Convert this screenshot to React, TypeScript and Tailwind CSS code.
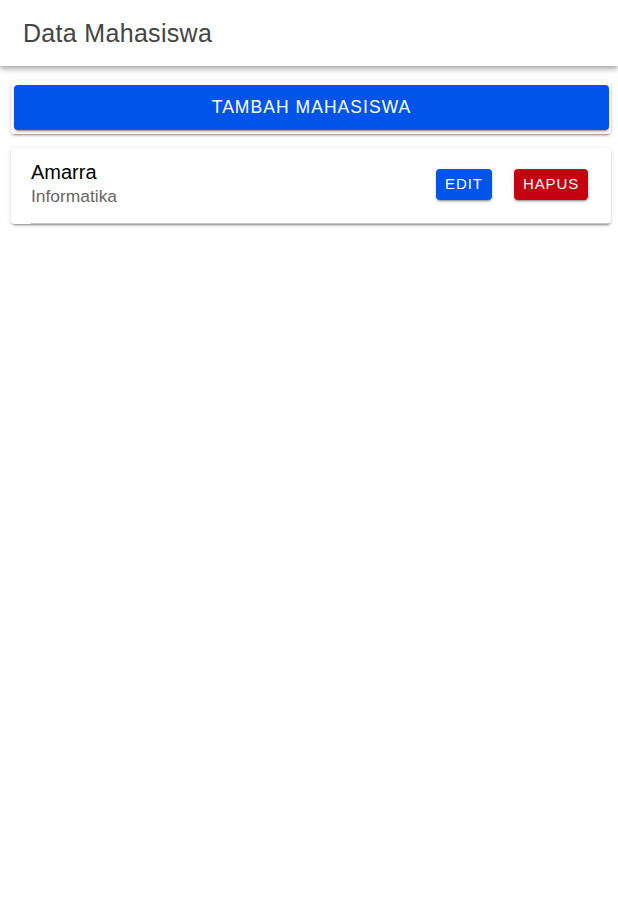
import React from "react";

const cardShadow =
  "shadow-[0_3px_1px_-2px_rgba(0,0,0,0.2),0_2px_2px_0_rgba(0,0,0,0.14),0_1px_5px_0_rgba(0,0,0,0.12)]";

export default function App() {
  return (
    <div className="min-h-[904px] bg-white" style={{ fontFamily: "'Liberation Sans', Arial, sans-serif" }}>
      <header className="relative z-10 flex h-[66px] items-center bg-white px-[23px] shadow-[0_2px_4px_-1px_rgba(0,0,0,0.2),0_4px_5px_0_rgba(0,0,0,0.14),0_1px_10px_0_rgba(0,0,0,0.12)]">
        <h1 className="text-[25px] font-normal leading-[30px] tracking-[0.0125em] text-[#444444]">Data Mahasiswa</h1>
      </header>
      <main className="flex flex-col">
        <div className={`ml-[11px] mr-[7px] mt-[15px] rounded-[4px] bg-white pb-[4px] pl-[3px] pr-[2px] pt-[4px] ${cardShadow}`}>
          <button className="flex h-[45px] w-full items-center justify-center rounded-[4px] bg-[#0054e9] text-[17.5px] font-normal tracking-[0.06em] text-white shadow-[0_3px_1px_-2px_rgba(0,0,0,0.2),0_2px_2px_0_rgba(0,0,0,0.14),0_1px_5px_0_rgba(0,0,0,0.12)]">
            TAMBAH MAHASISWA
          </button>
        </div>
        <div className={`relative ml-[11px] mr-[7px] mt-[14px] flex h-[76px] items-start rounded-[4px] bg-white pl-[20px] pr-[23px] ${cardShadow}`}>
          <div className="flex flex-1 flex-col pt-[12px]">
            <span className="text-[20px] leading-[24px] text-black">Amarra</span>
            <span className="mt-[2px] text-[17.4px] leading-[20px] text-[#666666]">Informatika</span>
          </div>
          <div className="mt-[21px] flex items-center gap-[22px]">
            <button className="flex h-[31px] w-[56px] items-center justify-center rounded-[4px] bg-[#0054e9] text-[15px] font-normal tracking-[0.06em] text-white shadow-[0_3px_1px_-2px_rgba(0,0,0,0.2),0_2px_2px_0_rgba(0,0,0,0.14),0_1px_5px_0_rgba(0,0,0,0.12)]">
              EDIT
            </button>
            <button className="flex h-[31px] w-[74px] items-center justify-center rounded-[4px] bg-[#c5000f] text-[15px] font-normal tracking-[0.06em] text-white shadow-[0_3px_1px_-2px_rgba(0,0,0,0.2),0_2px_2px_0_rgba(0,0,0,0.14),0_1px_5px_0_rgba(0,0,0,0.12)]">
              HAPUS
            </button>
          </div>
          <div className="absolute bottom-0 left-[20px] right-0 h-px rounded-br-[4px] bg-[#c4c4c4]" />
        </div>
      </main>
    </div>
  );
}
